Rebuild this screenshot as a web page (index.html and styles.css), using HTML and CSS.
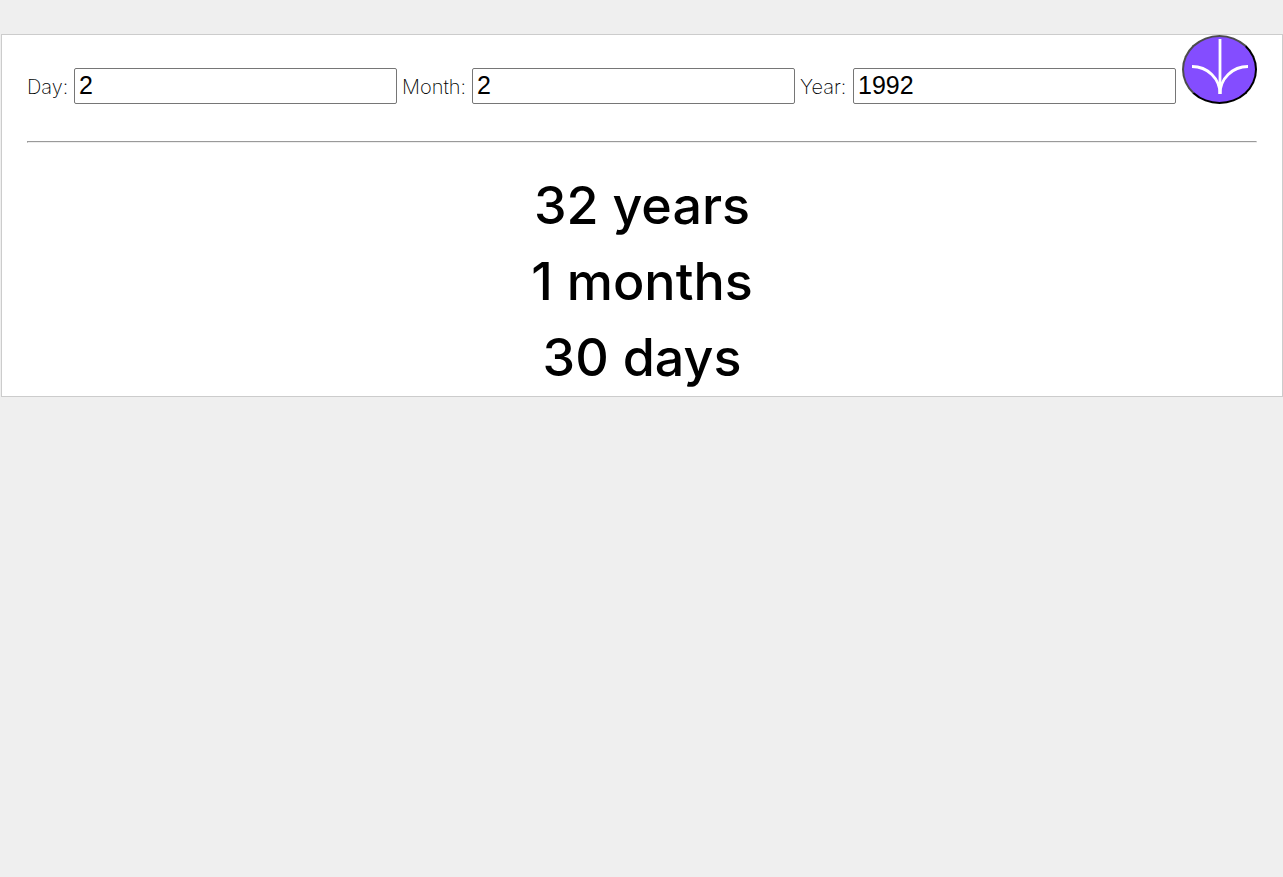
FILE: index.html
```html
<!DOCTYPE html>
<html lang="en">
<head>
<meta charset="utf-8">
<meta name="viewport" content="width=device-width, initial-scale=1">
<title>Age calculator</title>
<link rel="stylesheet" href="styles.css">
</head>
<body>
<main class="card">
  <form class="fields">
    <label class="label label-day" for="day">Day:</label>
    <input class="input" id="day" type="text" inputmode="numeric" value="2">
    <label class="label label-month" for="month">Month:</label>
    <input class="input" id="month" type="text" inputmode="numeric" value="2">
    <label class="label label-year" for="year">Year:</label>
    <input class="input" id="year" type="text" inputmode="numeric" value="1992">
    <button class="submit" type="button" aria-label="Calculate age">
      <svg class="arrow" viewBox="0 0 56 56" fill="none" stroke="#fff" stroke-width="2.8" aria-hidden="true">
        <path d="M28 1V56"/>
        <path d="M0 28.500C15.500 28.500 28 40.500 28 56"/>
        <path d="M56 28.500C40.500 28.500 28 40.500 28 56"/>
      </svg>
    </button>
  </form>
  <hr class="divider">
  <section class="results">
    <p class="result">32 years</p>
    <p class="result">1 months</p>
    <p class="result">30 days</p>
  </section>
</main>
</body>
</html>
```
FILE: styles.css
```css
* {
  box-sizing: border-box;
}

body {
  margin: 34px 0 0 1px;
  background: #efefef;
  color: #000;
  font-family: Inter, "Liberation Sans", sans-serif;
}

.card {
  padding: 0 25px;
  border: 1px solid #ccc;
  background: #fff;
}

.fields {
  display: flex;
  align-items: flex-end;
}

.label {
  flex: none;
  font-size: 20px;
  font-weight: 200;
  line-height: 34px;
}

.label-day {
  width: 47px;
}

.label-month {
  width: 75px;
  padding-left: 5px;
}

.label-year {
  width: 58px;
  padding-left: 5px;
}

.input {
  flex: 1;
  min-width: 0;
  height: 36px;
  padding: 1px 4px 2px;
  border: 1px solid #767676;
  border-radius: 2px;
  background: #fff;
  color: #000;
  font-family: "Liberation Sans", Arial, sans-serif;
  font-size: 25px;
}

.submit {
  display: flex;
  flex: none;
  align-items: center;
  justify-content: center;
  width: 75px;
  height: 69px;
  margin-left: 6px;
  padding: 0 0 7px;
  border: 2px solid;
  border-color: #4c4c4c #000 #000 #4c4c4c;
  border-radius: 50%;
  background: #844dff;
}

.arrow {
  flex: none;
  width: 56px;
  height: 56px;
}

.divider {
  height: 2px;
  margin: 37px 0 25px;
  border: 1px solid;
  border-color: #9a9a9a #eee #eee #9a9a9a;
}

.result {
  margin: 0;
  font-size: 52px;
  font-weight: 500;
  line-height: 76px;
  text-align: center;
}
```
